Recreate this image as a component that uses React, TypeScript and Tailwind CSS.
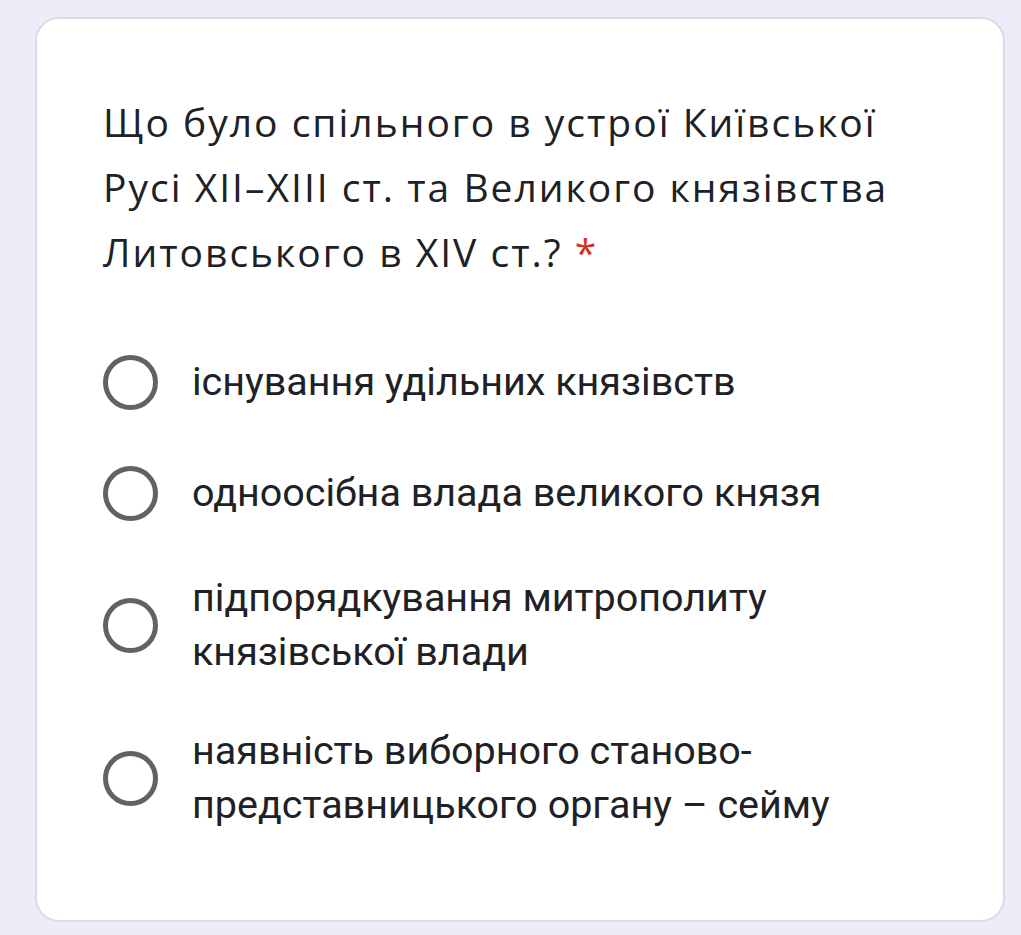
import React from 'react'

const options: string[][] = [
  ['існування удільних князівств'],
  ['одноосібна влада великого князя'],
  ['підпорядкування митрополиту', 'князівської влади'],
  ['наявність виборного станово-', 'представницького органу – сейму'],
]

function Radio() {
  return (
    <div className="w-[55px] h-[55px] shrink-0 rounded-full border-[5px] border-[#5f6368]" />
  )
}

export default function App() {
  return (
    <div className="min-h-screen bg-[#f0ebf8] pt-[17px] pl-[35px] pr-[16px] pb-[14px]">
      <div className="bg-white border-2 border-[#dadce0] rounded-[24px] pl-[66px] pr-[20px] pt-[70px] pb-[88px]">
        {/* Question title */}
        <div className="text-[39px] leading-[65px] tracking-[2px] text-[#202124] font-['Open_Sans',sans-serif]">
          <span className="block">Що було спільного в устрої Київської</span>
          <span className="block">Русі XII–XIII ст. та Великого князівства</span>
          <span className="block">
            Литовського в XIV ст.? <span className="text-[#d93025]">*</span>
          </span>
        </div>

        {/* Options */}
        <div className="mt-[65px] flex flex-col gap-[45px]">
          {options.map((lines, i) => (
            <div key={i} className="flex items-center gap-[34px] min-h-[66px]">
              <Radio />
              <div className="text-[39.5px] leading-[54px] text-[#202124] font-['Roboto',sans-serif]">
                {lines.map((l, j) => (
                  <span key={j} className="block">{l}</span>
                ))}
              </div>
            </div>
          ))}
        </div>
      </div>
    </div>
  )
}
